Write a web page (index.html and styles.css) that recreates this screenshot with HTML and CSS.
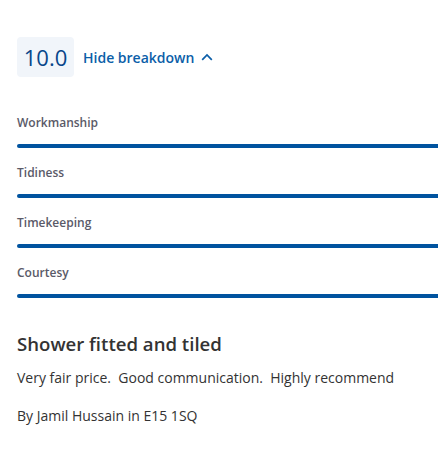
FILE: index.html
```html
<!DOCTYPE html>
<html>
<head>
<meta charset="utf-8">
<link rel="stylesheet" href="styles.css">
</head>
<body>
<div class="review">
  <div class="score-row">
    <div class="score">10.0</div>
    <button class="toggle">Hide breakdown
      <svg class="chev" width="12" height="8" viewBox="0 0 12 8"><path d="M1.2 6.8 L6 2 L10.8 6.8" fill="none" stroke="#0b5ea8" stroke-width="1.7"/></svg>
    </button>
  </div>
  <div class="breakdown">
    <div class="item"><div class="label">Workmanship</div><div class="bar"></div></div>
    <div class="item"><div class="label">Tidiness</div><div class="bar"></div></div>
    <div class="item"><div class="label">Timekeeping</div><div class="bar"></div></div>
    <div class="item"><div class="label">Courtesy</div><div class="bar"></div></div>
  </div>
  <h2 class="title">Shower fitted and tiled</h2>
  <p class="text">Very fair price.&nbsp; Good communication.&nbsp; Highly recommend</p>
  <p class="author">By Jamil Hussain in E15 1SQ</p>
</div>
</body>
</html>
```
FILE: styles.css
```css
html, body { margin: 0; padding: 0; background: #fff; overflow: hidden; }
body { font-family: "Open Sans", "Liberation Sans", sans-serif; color: #333; }
.review { padding: 37px 0 0 17px; }
.score-row { display: flex; align-items: center; gap: 9px; }
.score {
  width: 57px; height: 40px; box-sizing: border-box;
  display: flex; align-items: center; justify-content: center;
  background: #f1f5fa; border-radius: 4px;
  font-size: 22px; font-weight: 500; color: #08468a;
}
.toggle {
  display: flex; align-items: center; gap: 7px;
  border: 0; background: none; padding: 0; margin: 0;
  font-family: inherit; font-size: 14px; font-weight: 600; color: #0b5ea8;
}
.breakdown { margin-top: 33px; }
.item { height: 50px; }
.label { font-size: 12px; font-weight: 600; color: #5a5a68; line-height: 16px; padding-top: 5px; }
.bar { height: 4px; margin-top: 13px; margin-right: -10px; background: #00539f; border-radius: 2px; }
.title { margin: 22px 0 0; font-size: 18.6px; font-weight: 600; color: #333; line-height: 24px; }
.text { margin: 12px 0 0; font-size: 14px; line-height: 20px; }
.author { margin: 18px 0 0; font-size: 14px; line-height: 20px; }
```
